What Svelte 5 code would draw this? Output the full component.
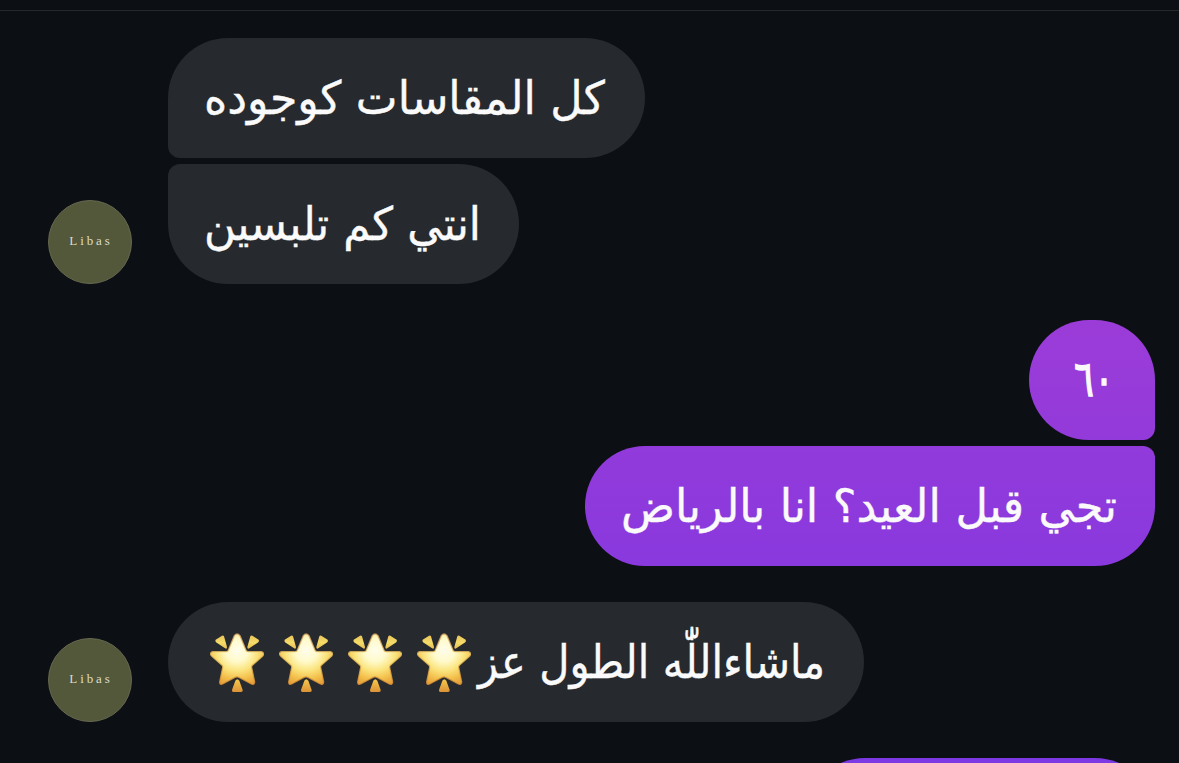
<script>
  const groups = [
    {
      side: 'in',
      bubbles: [
        { text: 'كل المقاسات كوجوده', width: 477, textWidth: 401, shift: -2, tail: 'bottom' },
        { text: 'انتي كم تلبسين', width: 351, textWidth: 277, shift: 0, tail: 'top' }
      ]
    },
    {
      side: 'out',
      bubbles: [
        { text: '٦٠', width: 126, textWidth: 40, shift: -3, size: 50, stroke: 1.3, tail: 'bottom', from: '#9b3cd8', to: '#933ada' },
        { text: 'تجي قبل العيد؟ انا بالرياض', width: 570, textWidth: 496, shift: 0, tail: 'top', from: '#923adb', to: '#8939de' }
      ]
    },
    {
      side: 'in',
      bubbles: [{ text: 'ماشاءاللّٰه الطول عز', width: 696, textWidth: 347, shift: -1, stars: 4 }]
    },
    {
      side: 'out',
      bubbles: [{ text: '', width: 350, textWidth: 0, from: '#7d39e3', to: '#7838e5' }]
    }
  ];
</script>

<main>
  <div class="rule"></div>
  <div class="thread">
    {#each groups as group}
      <section class="group {group.side}">
        {#if group.side === 'in'}
          <div class="avatar"><span>Libas</span></div>
        {/if}
        <div class="stack">
          {#each group.bubbles as b}
            <div
              class="bubble {b.tail ?? ''}"
              dir="rtl"
              style:width="{b.width}px"
              style:background={b.from ? `linear-gradient(${b.from}, ${b.to})` : null}
            >
              {#if b.text}
                <svg class="line" width={b.textWidth} height="120" direction="rtl">
                  <text
                    x={b.textWidth + b.shift}
                    y="76"
                    textLength={b.textWidth}
                    lengthAdjust="spacingAndGlyphs"
                    style:font-size="{b.size ?? 46}px"
                    style:stroke-width="{b.stroke ?? 0.4}px">{b.text}</text>
                </svg>
              {/if}
              {#if b.stars}
                <div class="stars">
                  {#each Array(b.stars) as _}
                    <svg width="54" height="60" viewBox="29 40 162 180">
                      <defs>
                        <radialGradient id="gold" gradientUnits="userSpaceOnUse" cx="110" cy="92" r="112">
                          <stop offset="0" stop-color="#fffdec" />
                          <stop offset=".3" stop-color="#fffacb" />
                          <stop offset=".55" stop-color="#fbe47e" />
                          <stop offset=".78" stop-color="#f3bf4b" />
                          <stop offset="1" stop-color="#e39a36" />
                        </radialGradient>
                        <linearGradient id="rim" x1="0" y1="0" x2="0" y2="1">
                          <stop offset="0" stop-color="#d8a568" />
                          <stop offset=".5" stop-color="#edc45c" />
                          <stop offset="1" stop-color="#dc9136" />
                        </linearGradient>
                        <linearGradient id="ray" x1="0" y1="0" x2="0" y2="1">
                          <stop offset="0" stop-color="#e9c45b" />
                          <stop offset=".55" stop-color="#f6dc68" />
                          <stop offset="1" stop-color="#e7bd52" />
                        </linearGradient>
                        <linearGradient id="foot" x1="0" y1="0" x2="0" y2="1">
                          <stop offset="0" stop-color="#f5c84d" />
                          <stop offset="1" stop-color="#dc9236" />
                        </linearGradient>
                      </defs>
                      <path fill="url(#gold)" stroke="url(#rim)" stroke-width="4" stroke-opacity=".8" d="M102 48Q110 38 119 48L137 92Q139 96 144 96L183 96Q194 100 187 109L156 137Q153 140 154 144L163 187Q162 197 153 193L116 173Q110 170 104 173L67 193Q58 197 58 187L67 144Q68 140 65 137L34 109Q26 100 37 96L77 96Q82 96 84 92Z" />
                      <path fill="url(#ray)" d="M46 60L65 48Q69 46 71 50L80 82Q80 90 73 85L47 68Q44 64 46 60ZM175 60L156 48Q152 46 150 50L141 82Q141 90 148 85L174 68Q177 64 175 60Z" />
                      <path fill="url(#foot)" d="M105 183Q111 174 117 183L127 211Q128 217 122 217H99Q94 217 95 211Z" />
                    </svg>
                  {/each}
                </div>
              {/if}
            </div>
          {/each}
        </div>
      </section>
    {/each}
  </div>
</main>

<style>
  :global(body) { background: #0c0f13; overflow: hidden; }
  main { height: 763px; overflow: hidden; background: #0c0f13; box-sizing: border-box; padding-top: 10px; }
  .rule { height: 1px; background: #26292c; }
  .thread { display: flex; flex-direction: column; gap: 36px; padding: 27px 24px 0 48px; }
  .group { display: flex; align-items: flex-end; gap: 36px; }
  .out { justify-content: flex-end; }
  .stack { display: flex; flex-direction: column; gap: 6px; }
  .out .stack { align-items: flex-end; }
  .avatar {
    width: 84px; height: 84px; border-radius: 50%; box-sizing: border-box; flex: none;
    background: #53583a; border: 1.5px solid #66694f;
    display: flex; align-items: center; justify-content: center;
    font: 13px/1 "Liberation Serif", serif; letter-spacing: 2.9px; color: #dcddca;
  }
  .avatar span { padding: 0 0 3px 2px; }
  .bubble {
    height: 120px; box-sizing: border-box; border-radius: 60px; background: #26292d;
    padding: 0 38px; display: flex; align-items: center; color: #fff;
  }
  .in .bottom { border-bottom-left-radius: 12px; }
  .in .top { border-top-left-radius: 12px; }
  .out .bottom { border-bottom-right-radius: 12px; }
  .out .top { border-top-right-radius: 12px; }
  .line { flex: none; overflow: visible; }
  .line text {
    font-family: "Noto Sans", "DejaVu Sans", sans-serif;
    word-spacing: 3px; fill: #fafafb; stroke: #fafafb;
  }
  .stars { display: flex; flex-direction: row-reverse; gap: 15px; margin-right: 8px; padding-top: 2px; }
  .stars svg { flex: none; }
</style>
